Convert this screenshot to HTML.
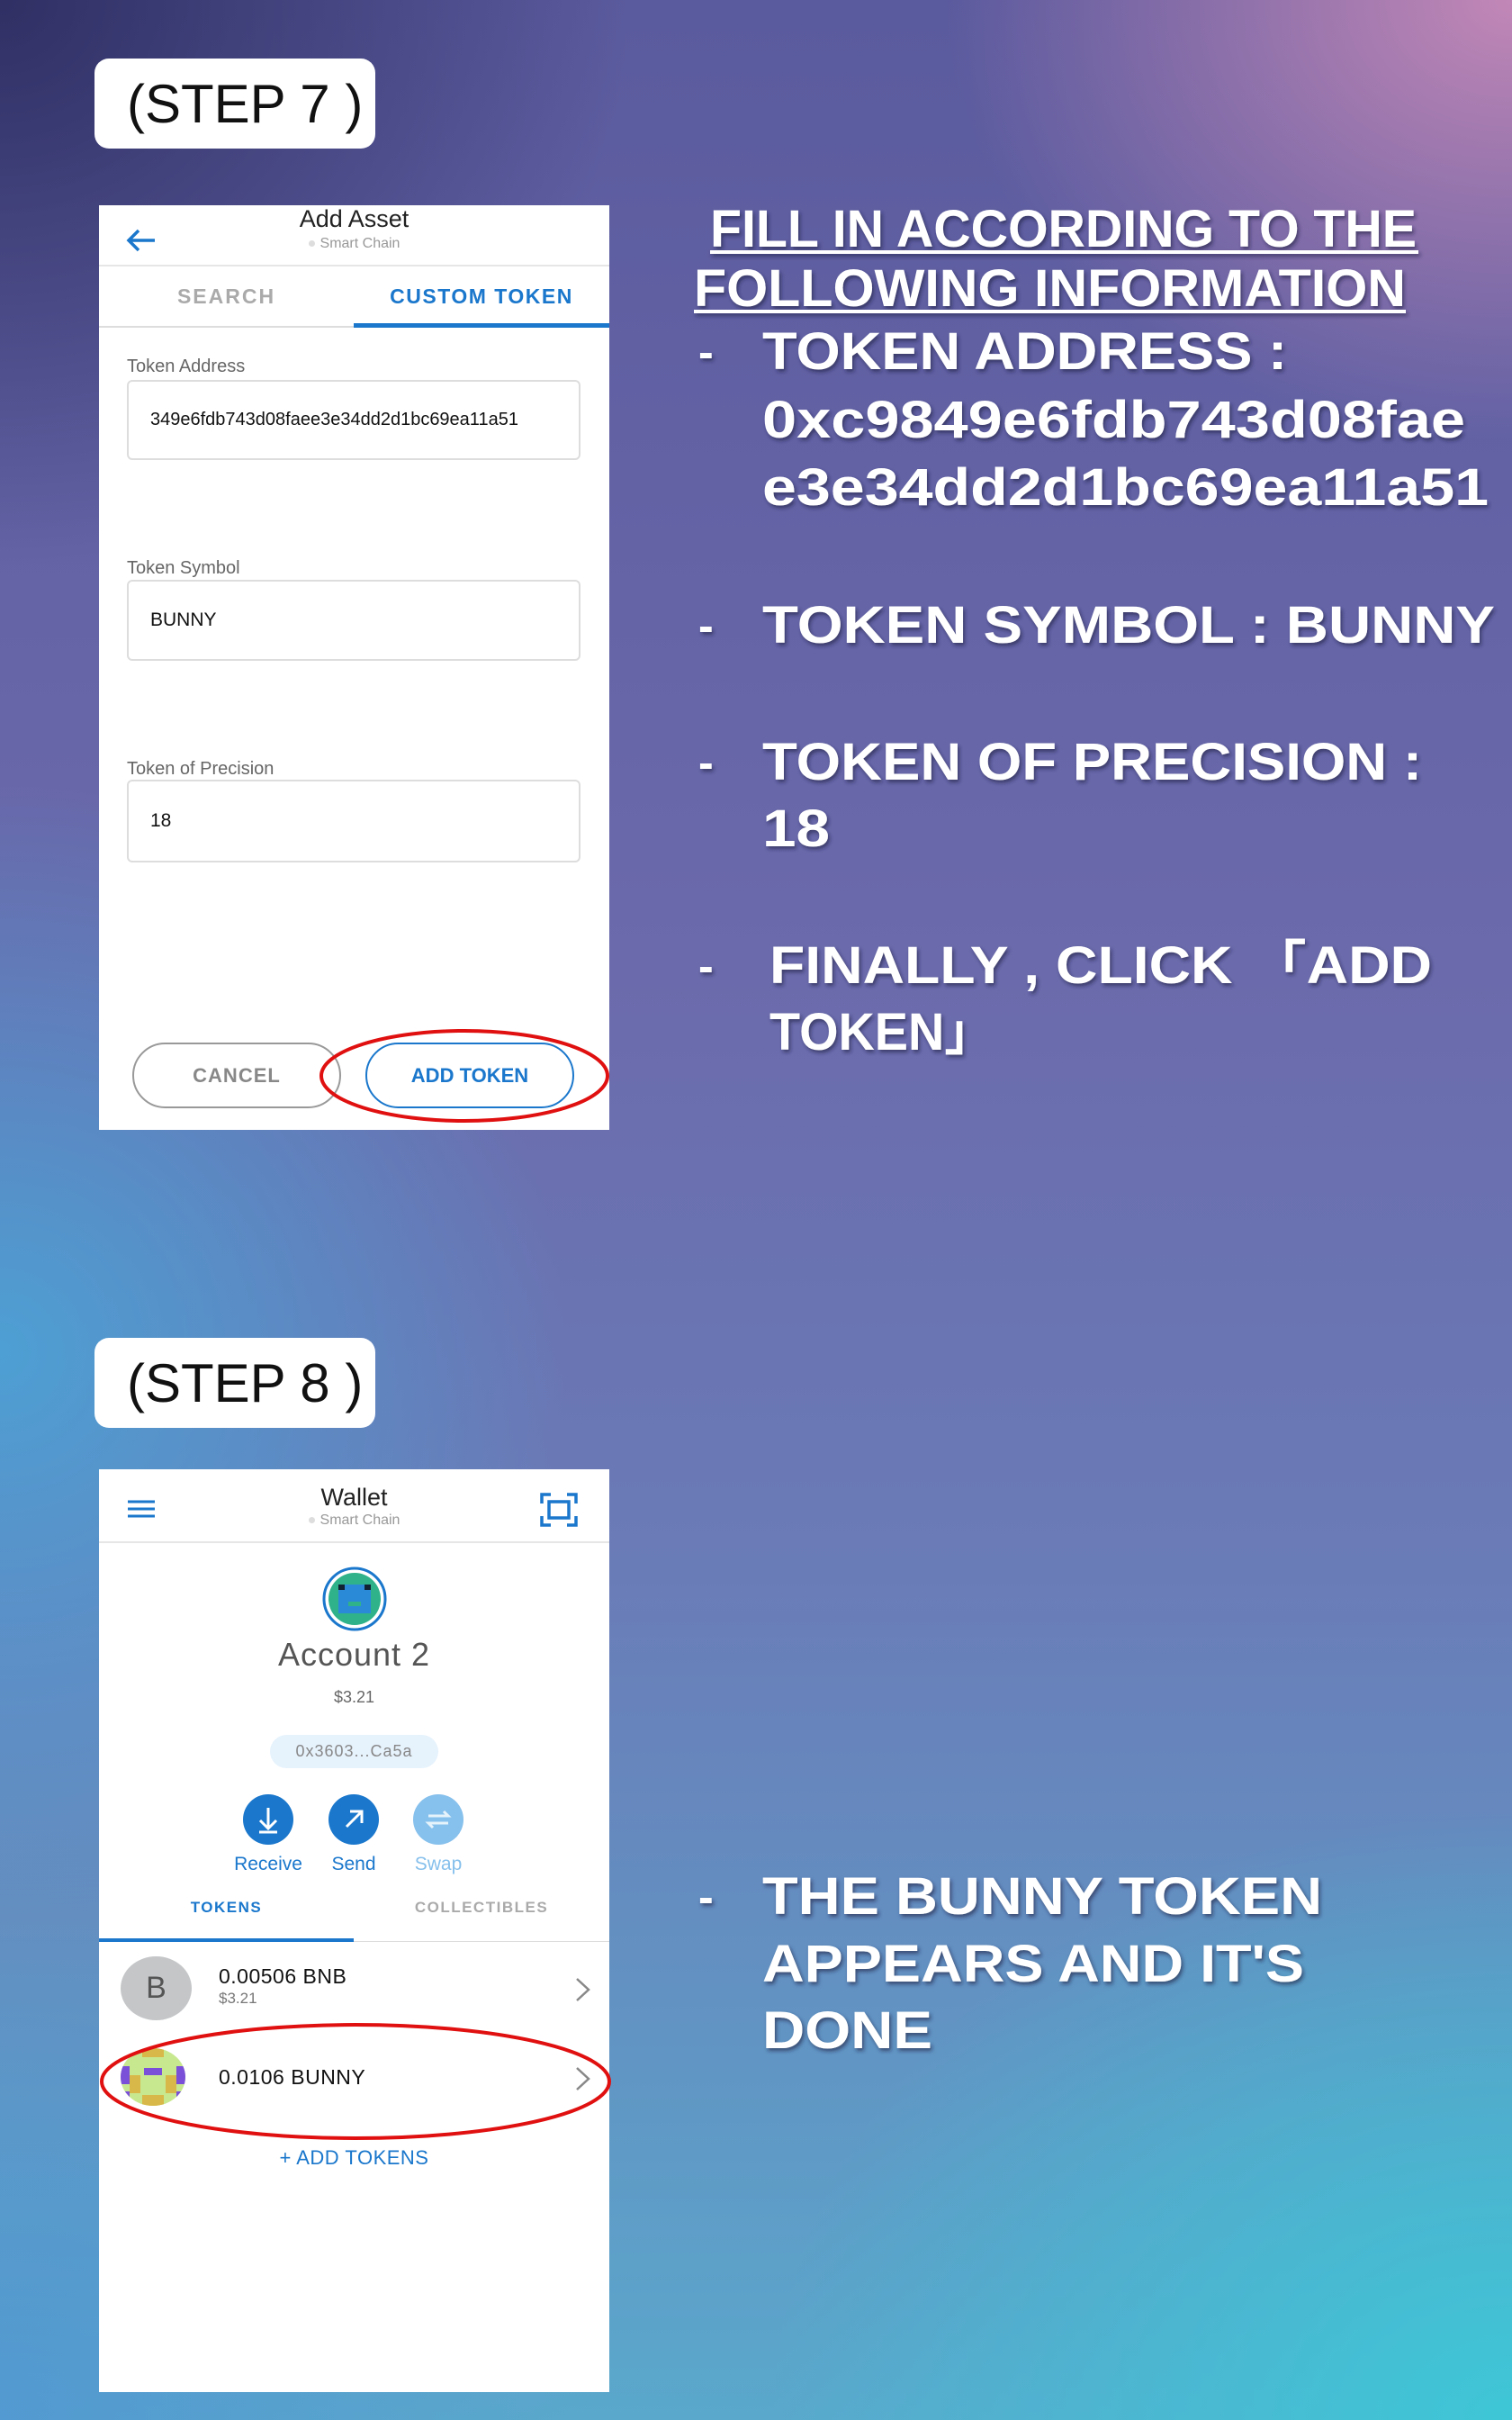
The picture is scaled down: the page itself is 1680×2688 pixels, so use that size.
<!DOCTYPE html>
<html><head><meta charset="utf-8">
<style>
*{margin:0;padding:0;box-sizing:border-box}
html,body{width:1680px;height:2688px;overflow:hidden}
body{position:relative;font-family:"Liberation Sans","Noto Sans CJK SC",sans-serif;
background:
radial-gradient(ellipse 900px 700px at 1680px 0px,rgba(205,140,185,0.9),rgba(205,140,185,0) 70%),
radial-gradient(ellipse 1000px 900px at 0px 0px,rgba(40,40,90,0.85),rgba(40,40,90,0) 70%),
radial-gradient(ellipse 1100px 900px at 1680px 2688px,rgba(60,200,215,0.95),rgba(60,200,215,0) 75%),
radial-gradient(ellipse 900px 900px at 0px 1500px,rgba(70,170,220,0.8),rgba(70,170,220,0) 70%),
radial-gradient(ellipse 900px 800px at 0px 2688px,rgba(80,150,210,0.8),rgba(80,150,210,0) 70%),
linear-gradient(180deg,#5a5a9e 0%,#6b6aac 40%,#6a7cb8 65%,#5aa8cc 100%);}
.abs{position:absolute}
.step{position:absolute;left:105px;width:312px;height:100px;background:#fff;border-radius:16px;font-size:60px;color:#111;display:flex;align-items:center;padding-left:36px;letter-spacing:0px}
.phone{position:absolute;left:110px;width:567px;background:#fff;overflow:hidden}
.c{position:absolute;text-align:center;white-space:nowrap}
.lbl{position:absolute;left:31px;font-size:20px;color:#666}
.box{position:absolute;left:31px;width:504px;border:2px solid #ddd;border-radius:6px;font-size:21px;color:#111;padding-left:24px;display:flex;align-items:center}
</style></head><body>

<div class="step" style="top:65px">(STEP 7 )</div>
<div class="step" style="top:1486px">(STEP 8 )</div>

<!-- Phone 1 -->
<div class="phone" style="top:228px;height:1027px">
  <svg class="abs" style="left:30px;top:26px" width="34" height="26" viewBox="0 0 34 26"><path d="M32 13H3M14 2L3 13l11 11" fill="none" stroke="#1a77cc" stroke-width="3.5"/></svg>
  <div class="c" style="left:0;width:567px;top:0;font-size:27px;color:#222">Add Asset</div>
  <div class="c" style="left:0;width:567px;top:34px;font-size:16px;color:#999"><span style="display:inline-block;width:7px;height:7px;border-radius:50%;background:#ddd;margin-right:6px;vertical-align:middle"></span>Smart Chain</div>
  <div class="abs" style="left:0;top:66px;width:567px;height:2px;background:#e6e6e6"></div>
  <div class="c" style="left:0;width:283px;top:88px;font-size:23px;font-weight:bold;color:#aaa;letter-spacing:2px">SEARCH</div>
  <div class="c" style="left:283px;width:284px;top:88px;font-size:23px;font-weight:bold;color:#1a77cc;letter-spacing:1.5px">CUSTOM TOKEN</div>
  <div class="abs" style="left:0;top:134px;width:567px;height:2px;background:#ddd"></div>
  <div class="abs" style="left:283px;top:131px;width:284px;height:5px;background:#1a77cc"></div>
  <div class="lbl" style="top:168px">Token Address</div>
  <div class="box" style="top:194px;height:89px;font-size:20px">349e6fdb743d08faee3e34dd2d1bc69ea11a51</div>
  <div class="lbl" style="top:392px">Token Symbol</div>
  <div class="box" style="top:416px;height:90px">BUNNY</div>
  <div class="lbl" style="top:615px">Token of Precision</div>
  <div class="box" style="top:638px;height:92px">18</div>
  <div class="abs" style="left:37px;top:930px;width:232px;height:73px;border:2px solid #999;border-radius:37px;text-align:center;line-height:69px;font-size:22px;font-weight:bold;color:#888;letter-spacing:1px">CANCEL</div>
  <div class="abs" style="left:296px;top:930px;width:232px;height:73px;border:2px solid #1a77cc;border-radius:37px;text-align:center;line-height:69px;font-size:22px;font-weight:bold;color:#1a77cc">ADD TOKEN</div>
</div>
<svg class="abs" style="left:352px;top:1140px" width="330" height="112"><ellipse cx="164" cy="55" rx="159" ry="50" fill="none" stroke="#e01010" stroke-width="4"/></svg>

<!-- Phone 2 -->
<div class="phone" style="top:1632px;height:1025px">
  <svg class="abs" style="left:32px;top:34px" width="32" height="22"><path d="M0 2h30M0 10h30M0 18h30" stroke="#1a77cc" stroke-width="3"/></svg>
  <svg class="abs" style="left:490px;top:26px" width="42" height="38" viewBox="0 0 42 38" fill="none" stroke="#1a77cc" stroke-width="3.5"><path d="M2 12V2h10M30 2h10v10M40 26v10H30M12 36H2V26"/><rect x="10" y="10" width="22" height="18"/></svg>
  <div class="c" style="left:0;width:567px;top:16px;font-size:27px;color:#222">Wallet</div>
  <div class="c" style="left:0;width:567px;top:48px;font-size:16px;color:#999"><span style="display:inline-block;width:7px;height:7px;border-radius:50%;background:#ddd;margin-right:6px;vertical-align:middle"></span>Smart Chain</div>
  <div class="abs" style="left:0;top:80px;width:567px;height:2px;background:#e6e6e6"></div>
  <svg class="abs" style="left:247px;top:107px" width="74" height="74"><circle cx="37" cy="37" r="34" fill="#fff" stroke="#1a77cc" stroke-width="3"/><circle cx="37" cy="37" r="29" fill="#2fb28a"/><rect x="19" y="21" width="36" height="32" fill="#2a8ad8"/><rect x="19" y="21" width="7" height="6" fill="#123"/><rect x="48" y="21" width="7" height="6" fill="#123"/><rect x="30" y="40" width="14" height="5" fill="#2fb28a"/></svg>
  <div class="c" style="left:0;width:567px;top:185px;font-size:36px;color:#555;letter-spacing:1px">Account 2</div>
  <div class="c" style="left:0;width:567px;top:243px;font-size:18px;color:#666">$3.21</div>
  <div class="abs" style="left:190px;top:295px;width:187px;height:37px;border-radius:19px;background:#e6f2fc;text-align:center;line-height:37px;font-size:18px;color:#888;letter-spacing:1px">0x3603...Ca5a</div>
  <svg class="abs" style="left:160px;top:361px" width="56" height="56"><circle cx="28" cy="28" r="28" fill="#1a77cc"/><path d="M28 15v22M19 29l9 9 9-9M18 42h20" stroke="#fff" stroke-width="3" fill="none"/></svg>
  <svg class="abs" style="left:255px;top:361px" width="56" height="56"><circle cx="28" cy="28" r="28" fill="#1a77cc"/><path d="M20 36l16-16M24 19h13v13" stroke="#fff" stroke-width="3" fill="none"/></svg>
  <svg class="abs" style="left:349px;top:361px" width="56" height="56"><circle cx="28" cy="28" r="28" fill="#86c0ec"/><path d="M17 24h22l-5-5M39 32H17l5 5" stroke="#fff" stroke-width="3" fill="none" opacity=".8"/></svg>
  <div class="c" style="left:138px;width:100px;top:427px;font-size:21px;color:#1a77cc">Receive</div>
  <div class="c" style="left:233px;width:100px;top:427px;font-size:21px;color:#1a77cc">Send</div>
  <div class="c" style="left:327px;width:100px;top:427px;font-size:21px;color:#86c0ec">Swap</div>
  <div class="c" style="left:0;width:283px;top:477px;font-size:17px;font-weight:bold;color:#1a77cc;letter-spacing:1.5px">TOKENS</div>
  <div class="c" style="left:283px;width:284px;top:477px;font-size:17px;font-weight:bold;color:#aaa;letter-spacing:1.5px">COLLECTIBLES</div>
  <div class="abs" style="left:0;top:524px;width:567px;height:1px;background:#ddd"></div>
  <div class="abs" style="left:0;top:521px;width:283px;height:4px;background:#1a77cc"></div>
  <div class="abs" style="left:24px;top:541px;width:79px;height:71px;border-radius:50%;background:#c4c6c8;text-align:center;line-height:71px;font-size:34px;color:#555">B</div>
  <div class="abs" style="left:133px;top:550px;font-size:23px;color:#111;letter-spacing:0.5px">0.00506 BNB</div>
  <div class="abs" style="left:133px;top:578px;font-size:17px;color:#777">$3.21</div>
  <svg class="abs" style="left:528px;top:563px" width="20" height="30"><path d="M3 3l13 12L3 27" stroke="#888" stroke-width="2.5" fill="none"/></svg>
  <svg class="abs" style="left:24px;top:643px" width="72" height="64"><defs><clipPath id="cp"><ellipse cx="36" cy="32" rx="36" ry="32"/></clipPath></defs><g clip-path="url(#cp)"><rect width="72" height="64" fill="#c8e890"/><rect x="24" y="0" width="24" height="10" fill="#d8b848"/><rect x="26" y="22" width="20" height="8" fill="#7a50d8"/><rect x="0" y="20" width="10" height="20" fill="#7a50d8"/><rect x="62" y="20" width="10" height="20" fill="#7a50d8"/><rect x="10" y="30" width="12" height="20" fill="#d8b848"/><rect x="50" y="30" width="12" height="20" fill="#d8b848"/><rect x="24" y="52" width="24" height="12" fill="#d8b848"/><rect x="0" y="48" width="10" height="10" fill="#7a50d8"/><rect x="62" y="48" width="10" height="10" fill="#7a50d8"/></g></svg>
  <div class="abs" style="left:133px;top:662px;font-size:23px;color:#111;letter-spacing:0.5px">0.0106 BUNNY</div>
  <svg class="abs" style="left:528px;top:662px" width="20" height="30"><path d="M3 3l13 12L3 27" stroke="#888" stroke-width="2.5" fill="none"/></svg>
  <div class="c" style="left:0;width:567px;top:752px;font-size:22px;color:#1a77cc;letter-spacing:0.5px">+ ADD TOKENS</div>
</div>
<svg class="abs" style="left:108px;top:2244px" width="576" height="138"><ellipse cx="287" cy="68" rx="282" ry="63" fill="none" stroke="#e01010" stroke-width="4"/></svg>

<!-- Right text -->
<svg class="abs" style="left:0;top:0" width="1680" height="2688">
<defs><filter id="sh" x="-5%" y="-20%" width="110%" height="140%"><feDropShadow dx="2" dy="3" stdDeviation="2" flood-color="#202040" flood-opacity="0.6"/></filter></defs>
<g fill="#fff" font-family="Liberation Sans, Noto Sans CJK SC, sans-serif" font-weight="bold" font-size="58" filter="url(#sh)">
<text x="789" y="274" textLength="785" lengthAdjust="spacingAndGlyphs">FILL IN ACCORDING TO THE</text>
<rect x="789" y="278" width="787" height="4"/>
<text x="771" y="340" textLength="791" lengthAdjust="spacingAndGlyphs">FOLLOWING INFORMATION</text>
<rect x="771" y="344" width="791" height="4"/>
<text x="776" y="408" font-size="50">-</text>
<text x="847" y="410" textLength="583" lengthAdjust="spacingAndGlyphs">TOKEN ADDRESS :</text>
<text x="847" y="486" textLength="781" lengthAdjust="spacingAndGlyphs">0xc9849e6fdb743d08fae</text>
<text x="847" y="561" textLength="807" lengthAdjust="spacingAndGlyphs">e3e34dd2d1bc69ea11a51</text>
<text x="776" y="712" font-size="50">-</text>
<text x="847" y="714" textLength="814" lengthAdjust="spacingAndGlyphs">TOKEN SYMBOL : BUNNY</text>
<text x="776" y="864" font-size="50">-</text>
<text x="847" y="866" textLength="733" lengthAdjust="spacingAndGlyphs">TOKEN OF PRECISION :</text>
<text x="847" y="940" textLength="75" lengthAdjust="spacingAndGlyphs">18</text>
<text x="776" y="1090" font-size="50">-</text>
<text x="855" y="1092" textLength="736" lengthAdjust="spacingAndGlyphs">FINALLY , CLICK 「ADD</text>
<text x="855" y="1166" textLength="250" lengthAdjust="spacingAndGlyphs">TOKEN」</text>
<text x="776" y="2124" font-size="50">-</text>
<text x="847" y="2126" textLength="622" lengthAdjust="spacingAndGlyphs">THE BUNNY TOKEN</text>
<text x="847" y="2201" textLength="602" lengthAdjust="spacingAndGlyphs">APPEARS AND IT'S</text>
<text x="847" y="2275" textLength="189" lengthAdjust="spacingAndGlyphs">DONE</text>
</g>
</svg>
</body></html>
